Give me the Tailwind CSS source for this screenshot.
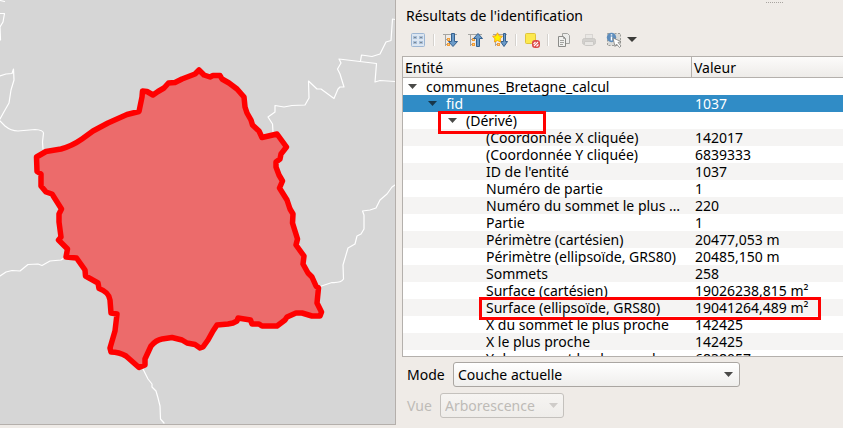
<!DOCTYPE html>
<html lang="fr">
<head>
<meta charset="utf-8">
<meta name="viewport" content="width=device-width, initial-scale=1">
<title>Résultats de l'identification</title>
<script src="https://cdn.jsdelivr.net/npm/@tailwindcss/browser@4"></script>
</head>
<body class="flex h-screen overflow-hidden bg-[#efebe7] font-['Noto_Sans',sans-serif] text-sm text-black">

<!-- Map canvas -->
<main class="mb-[3px] min-w-0 flex-[395] overflow-hidden border-r border-b border-[#b4afab] bg-[#d6d6d6]">
  <svg class="block h-full w-full" viewBox="0 0 395 424" preserveAspectRatio="xMinYMin slice" role="img" aria-label="Carte de la commune" fill="none" stroke-linejoin="round" stroke-linecap="round">
    <g stroke="#fff" stroke-width="1.2">
      <path d="M0 .5 4.500 1.500M0 13.500H4.500L3 22 0 27 .5 40M0 76 6 74 12 73.500 13.500 69 14 80 11 90 9 103 5 110 0 119M0 121 5 126Q11 131 18 131L35 129.500Q43 130 43.500 133L42.500 142 43 149"/>
      <path d="M273 132 272.500 124 268 117 275 112 275 105.500 284 107 292 105.500 305 105 309 98 308.500 81 317 89H321L334 98.500 338 89 340 87 344 87 340 74 337.500 69 341 63 339 59 376.500 63.500 375 82 380 80.500 395 81.500M360.500 61 361.500 55 372 56.500 380 54 386 42 391 40.500 392.500 19 395 19.500"/>
      <path d="M395 185 392 187 387 194 380 200 376 208 370 210 362.500 211 364 215V229L361 234 357 236 355 244 348 248 343 265 343.500 279Q341 283 332 282.500L320 286.500"/>
      <path d="M0 276 6 272 12 270.500 20 271 28 264.500 38 264 42 265.500 50 261 61 260 64 258M143 369 148 379 152 384 152 387 156 391 158 398 160 406 160.500 419 164 423"/>
    </g>
    <path fill="#ec6b6b" stroke="#f00" stroke-width="5.500" d="M36.500 157 46 151.500 61 149Q72 146 82 139L93 131 108 123 127 114.500 139 111.500 142 97 142.500 91 147 91.500 153 95 158 91.500 164 88 168.500 83 175 82.500 182 79 195 74 199 70 204 75 210 77 213 75.500H220L222 79 229 83 237 89 244 97 245 107 247 113 251 120 252.500 125 259 131 262 137.500 277 134 286.500 147 281 154 280 159 276 162V167L279 175 282.500 181 279.500 188 287 200 290 209 293 214 292.500 223 297.500 239 296 245 304 256 303 264 308 273 312 277 316 286 318.500 288 317 303 321.500 312 320 316H312L302 313H296L287 317 285 320 277 326H262L259 324H252L250.500 320 238 318 237 321 233 323 228 324 217 325 213 331 208 340 203 347 200 348 195 344.500 187 343 182 340 172 337.500 162 339Q156 340 151 346L145 359V365L139 367.500 126 356Q119 352 111 352L110 348 115 331 117 314 111 313 110 300Q109 292 99 288.500L98 283 85.500 276 85 270 76.500 258 66 257 67.500 249 58.500 240 61 237 59 222V214L61.500 209 52 194 46 192 41 186V174L37 171.500Z"/>
  </svg>
</main>

<!-- Identification panel -->
<aside class="relative flex min-w-0 flex-[441] flex-col pl-[6px]">
  <div class="absolute top-[2px] right-[60px] w-[17px] border-t border-dotted border-[#a8a4a0]"></div>
  <h1 class="px-1 pt-[6px] leading-5">Résultats de l'identification</h1>

  <div class="flex h-[30px] items-center gap-px px-1 pb-[3px]" role="toolbar" aria-label="Outils d'identification">
    <button class="px-1" aria-label="Formulaire">
      <svg class="size-4" viewBox="0 0 16 16"><rect x="1.500" y="1.500" width="13" height="13" rx="1" fill="#dce6f1" stroke="#9db6d3"/><g fill="#fff" stroke="#a9bfd8"><rect x="3.500" y="4.500" width="3" height="2"/><rect x="9.500" y="4.500" width="3" height="2"/><rect x="3.500" y="9.500" width="3" height="2"/><rect x="9.500" y="9.500" width="3" height="2"/></g><path d="M4 5.500h2M10 5.500h2M4 10.500h2M10 10.500h2" stroke="#7d8792"/></svg>
    </button>
    <span class="flex w-[6px] justify-center"><i class="h-3 w-[2px] border-l border-[#d5d2ce] bg-white"></i></span>
    <button class="px-1" aria-label="Étendre l'arborescence">
      <svg class="size-4" viewBox="0 0 16 16"><path d="M1 2.500h14M3.500 3v11M4 7.500h3M4 12.500h3" stroke="#a5a5a2" fill="none"/><g fill="#ffd18a" stroke="#f29d38"><rect x="5.500" y="6.500" width="2" height="2"/><rect x="5.500" y="11.500" width="2" height="2"/></g><path d="M9.500 1.500h3v8h3L11 14.500 6.500 9.500h3z" fill="#6b9bc9" stroke="#35618f"/></svg>
    </button>
    <button class="px-1" aria-label="Réduire l'arborescence">
      <svg class="size-4" viewBox="0 0 16 16"><path d="M1 2.500h14M3.500 3v11M4 7.500h3M4 12.500h3" stroke="#a5a5a2" fill="none"/><g fill="#ffd18a" stroke="#f29d38"><rect x="5.500" y="6.500" width="2" height="2"/><rect x="5.500" y="11.500" width="2" height="2"/></g><path d="M9.500 14.500h3v-8h3L11 1.500 6.500 6.500h3z" fill="#6b9bc9" stroke="#35618f"/></svg>
    </button>
    <button class="px-1" aria-label="Étendre les nouveaux résultats">
      <svg class="size-4" viewBox="0 0 16 16"><path d="M1 2.500h14M3.500 3v11M4 12.500h3" stroke="#a5a5a2" fill="none"/><rect x="5.500" y="11.500" width="2" height="2" fill="#ffd18a" stroke="#f29d38"/><path d="M11.500 1.500h2v8h2L12 14.500 8.500 9.500h3z" fill="#6b9bc9" stroke="#35618f"/><path d="m5.500.8 1.600 3 3.400.5-2.400 2.400.6 3.300-3.200-1.500L2.400 10 3 6.700.6 4.300 4 3.800z" fill="#fff200" stroke="#f4a21c"/></svg>
    </button>
    <span class="flex w-[6px] justify-center"><i class="h-3 w-[2px] border-l border-[#d5d2ce] bg-white"></i></span>
    <button class="px-1" aria-label="Effacer les résultats">
      <svg class="size-4" viewBox="0 0 16 16"><rect x="1.500" y="1.500" width="10" height="10" rx="1" fill="#fce94f" stroke="#dfc43c"/><rect x="8" y="8" width="8" height="8" rx="3" fill="#dc4a4a"/><path d="m10 14 4-4M9.500 12l2-2M12.500 14.500l2-2" stroke="#fff" stroke-width="1.100"/></svg>
    </button>
    <span class="flex w-[6px] justify-center"><i class="h-3 w-[2px] border-l border-[#d5d2ce] bg-white"></i></span>
    <button class="px-1" aria-label="Copier">
      <svg class="size-4" viewBox="0 0 16 16"><path d="M6.500 1.500h5l2 2v8h-7z" fill="#ececea" stroke="#a3a3a0"/><path d="M2.500 4.500h5l2 2v8h-7z" fill="#f0f0ee" stroke="#8b8b88"/><path d="M7.500 4.500v2h2M4 8.500h4M4 10.500h4M4 12.500h3" fill="none" stroke="#a3a3a0"/></svg>
    </button>
    <button class="px-1" aria-label="Imprimer" disabled>
      <svg class="size-4" viewBox="0 0 16 16"><rect x="4.500" y="2.500" width="7" height="5" fill="#e9e7e4" stroke="#d8d5d2"/><rect x="1.500" y="6.500" width="13" height="6" rx="2" fill="#d2d0cd" stroke="#cac8c5"/><path d="M3.500 9.500h9v3q0 1-1 1h-7q-1 0-1-1z" fill="#e8e6e3" stroke="#cac8c5"/></svg>
    </button>
    <button class="flex items-center pl-1" aria-label="Identifier les entités">
      <svg class="size-4" viewBox="0 0 16 16"><rect x="1.500" y="1.500" width="13" height="12" fill="#dadad7" stroke="#9c9c98" stroke-dasharray="2 1.500"/><circle cx="5.500" cy="5.500" r="4.700" fill="#5e8dbc"/><path d="M5.500 2.200v1.400M5.500 4.600v4" stroke="#fff" stroke-width="1.500"/><path d="m7 6 8 3.500-3 1 3 3.500-1.500 1.500-3-3.500-1.500 2.500z" fill="#fff" stroke="#80807d" stroke-width=".8"/></svg>
      <svg class="ml-[5px] h-[5px] w-[10px]" viewBox="0 0 10 5"><path d="M0 0h10L5 5z" fill="#3c3c3a"/></svg>
    </button>
  </div>

  <!-- Results tree -->
  <div class="min-h-0 flex-1 overflow-hidden border-y border-l border-[#b4b0ac] bg-white">
    <table class="w-full table-fixed border-separate border-spacing-0 text-left leading-[17px] whitespace-nowrap">
      <colgroup><col class="w-[289px]"><col></colgroup>
      <thead class="bg-linear-to-b from-[#fcfbfa] to-[#edebe8]">
        <tr>
          <th scope="col" class="h-[21px] border-r border-b border-[#b4b0ac] px-[2px] font-normal">Entité</th>
          <th scope="col" class="h-[21px] border-b border-[#b4b0ac] px-[2px] font-normal">Valeur</th>
        </tr>
      </thead>
      <tbody class="[&_td]:h-[17px] [&_td]:p-0 [&_td+td]:pl-[3px]">
        <tr>
          <td><div class="flex items-center gap-[9px] pl-[5px]"><svg class="h-[5px] w-[9px]" viewBox="0 0 9 5"><path d="M0 0h9L4.500 5z" fill="#4a4a48"/></svg>communes_Bretagne_calcul</div></td>
          <td></td>
        </tr>
        <tr class="bg-[#308cc6] text-white">
          <td><div class="flex items-center gap-[9px] pl-[25px]"><svg class="h-[5px] w-[9px]" viewBox="0 0 9 5"><path d="M0 0h9L4.500 5z" fill="#17364a"/></svg>fid</div></td>
          <td>1037</td>
        </tr>
        <tr class="relative">
          <td><div class="flex items-center gap-[9px] pl-[45px]"><svg class="h-[5px] w-[9px]" viewBox="0 0 9 5"><path d="M0 0h9L4.500 5z" fill="#4a4a48"/></svg>(Dérivé)</div><span class="absolute -top-px -bottom-[5px] left-[35px] z-10 w-[108px] border-3 border-[#f00]"></span></td>
          <td></td>
        </tr>
        <tr class="bg-[#f5f4f3]"><td><div class="pl-[83px]">(Coordonnée X cliquée)</div></td><td>142017</td></tr>
        <tr><td><div class="pl-[83px]">(Coordonnée Y cliquée)</div></td><td>6839333</td></tr>
        <tr class="bg-[#f5f4f3]"><td><div class="pl-[83px]">ID de l'entité</div></td><td>1037</td></tr>
        <tr><td><div class="pl-[83px]">Numéro de partie</div></td><td>1</td></tr>
        <tr class="bg-[#f5f4f3]"><td><div class="pl-[83px]">Numéro du sommet le plus …</div></td><td>220</td></tr>
        <tr><td><div class="pl-[83px]">Partie</div></td><td>1</td></tr>
        <tr class="bg-[#f5f4f3]"><td><div class="pl-[83px]">Périmètre (cartésien)</div></td><td>20477,053 m</td></tr>
        <tr><td><div class="pl-[83px]">Périmètre (ellipsoïde, GRS80)</div></td><td>20485,150 m</td></tr>
        <tr class="bg-[#f5f4f3]"><td><div class="pl-[83px]">Sommets</div></td><td>258</td></tr>
        <tr><td><div class="pl-[83px]">Surface (cartésien)</div></td><td>19026238,815 m²</td></tr>
        <tr class="relative bg-[#f5f4f3]">
          <td><div class="pl-[83px]">Surface (ellipsoïde, GRS80)</div><span class="absolute -top-[2px] right-[22px] -bottom-1 left-[76px] z-10 border-3 border-[#f00]"></span></td>
          <td>19041264,489 m²</td>
        </tr>
        <tr><td><div class="pl-[83px]">X du sommet le plus proche</div></td><td>142425</td></tr>
        <tr class="bg-[#f5f4f3]"><td><div class="pl-[83px]">X le plus proche</div></td><td>142425</td></tr>
        <tr><td><div class="pl-[83px]">Y du sommet le plus proche</div></td><td>6838057</td></tr>
      </tbody>
    </table>
  </div>

  <form class="flex flex-col gap-[6px] pt-[5px] pb-[10px] pl-[5px]">
    <div class="flex items-center gap-[7px]">
      <label for="mode" class="w-[39px]">Mode</label>
      <div class="relative mr-[103px] flex-1">
        <select id="mode" class="block h-[25px] w-full appearance-none rounded-[3px] border border-[#aaa6a2] bg-linear-to-b from-white to-[#efeeec] px-1 leading-5">
          <option>Couche actuelle</option>
        </select>
        <svg class="pointer-events-none absolute top-[10px] right-[7px] h-[5px] w-[9px]" viewBox="0 0 9 5"><path d="M0 0h9L4.500 5z" fill="#4a4a48"/></svg>
      </div>
    </div>
    <div class="flex items-center gap-[7px] text-[#bebbb7]">
      <label for="vue" class="w-[26px]">Vue</label>
      <div class="relative w-[124px]">
        <select id="vue" disabled class="block h-[25px] w-full appearance-none rounded-[3px] border border-[#c4c1bd] bg-linear-to-b from-[#f6f4f2] to-[#efedea] px-1 leading-5 opacity-100">
          <option>Arborescence</option>
        </select>
        <svg class="pointer-events-none absolute top-[10px] right-[6px] h-[5px] w-[9px]" viewBox="0 0 9 5"><path d="M0 0h9L4.500 5z" fill="#cfccc9"/></svg>
      </div>
    </div>
  </form>
</aside>
</body>
</html>
